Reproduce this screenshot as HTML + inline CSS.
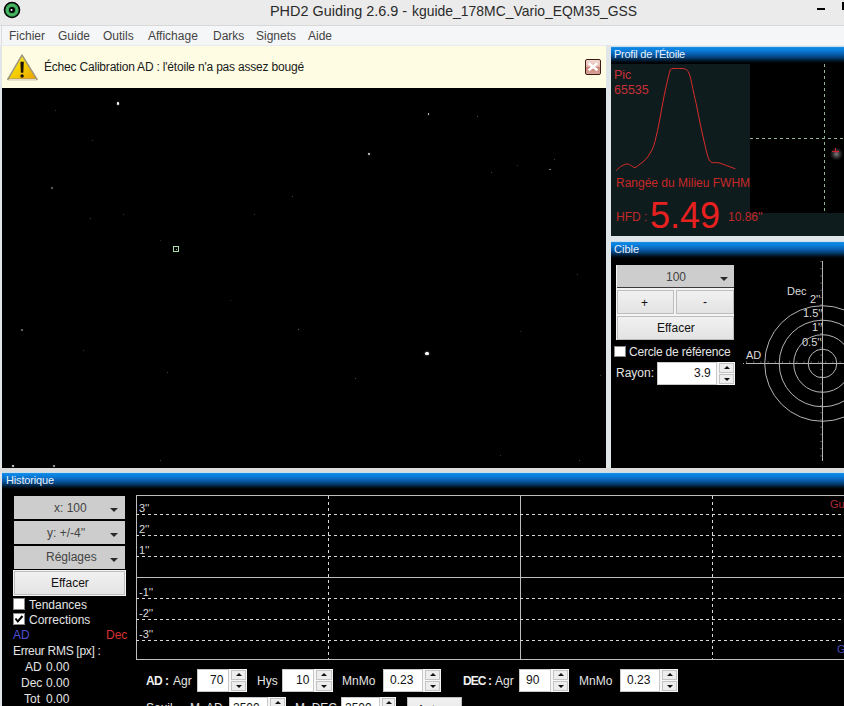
<!DOCTYPE html>
<html><head><meta charset="utf-8">
<style>
*{margin:0;padding:0;box-sizing:border-box}
html,body{width:844px;height:706px;overflow:hidden;background:#e9ecee;font-family:"Liberation Sans",sans-serif}
.a{position:absolute}
.t{position:absolute;white-space:nowrap;line-height:1}
.hdr{position:absolute;background:linear-gradient(#c4def2 0,#c4def2 1px,#2c92dc 1px,#0b86e4 2px,#0a80dc 4px,#0a70c8 6px,#0858a4 9px,#043a6c 12px,#011424 15px,#000 17px);color:#e6f2ff;font-size:11px}
.combo{position:absolute;background:#cdcdcd;color:#3c3c3c;font-size:12px;text-align:center}
.arr{position:absolute;width:0;height:0;border-left:4px solid transparent;border-right:4px solid transparent;border-top:4px solid #2a2a2a}
.btn{position:absolute;background:linear-gradient(#f1f1f1,#e3e3e3);border:1px solid #bdbdbd;color:#111;font-size:12px;text-align:center}
.fld{position:absolute;background:#fff;border:1px solid #c8c8c8;color:#111;font-size:12px}
.spin{position:absolute;background:#f6f6f6}
.spin i{position:absolute;left:2px;right:1px;height:10px;background:#ededed;border:1px solid #c4c4c4}
.up:after,.dn:after{content:"";position:absolute;left:50%;margin-left:-3px;width:0;height:0;border-left:3px solid transparent;border-right:3px solid transparent}
.up:after{top:2px;border-bottom:3px solid #111}
.dn:after{top:3px;border-top:3px solid #111}
.wt{color:#e4e4e4;font-size:12px}
</style></head><body>

<!-- Title bar -->
<div class="a" style="left:0;top:0;width:844px;height:25px;background:#ebebeb"></div>
<div class="a" style="left:0;top:25px;width:844px;height:1px;background:#d8d8d8"></div>
<svg class="a" style="left:3px;top:1px" width="19" height="19" viewBox="0 0 19 19">
  <circle cx="9" cy="9" r="7.5" fill="#36a352" stroke="#050505" stroke-width="1.6"/>
  <circle cx="9" cy="9" r="5" fill="none" stroke="#5cc472" stroke-width="1"/>
  <circle cx="9" cy="9" r="3" fill="#000"/>
  <circle cx="8.5" cy="9" r="1" fill="#fff"/>
</svg>
<div class="t" style="left:270px;top:3px;font-size:15px;color:#2a2a2a;transform:scaleX(0.962);transform-origin:0 0">PHD2 Guiding 2.6.9 -</div><div class="t" style="left:412px;top:3px;font-size:15px;color:#2a2a2a;transform:scaleX(0.929);transform-origin:0 0">kguide_178MC_Vario_EQM35_GSS</div>
<div class="a" style="left:817px;top:8px;width:8px;height:2px;background:#000"></div>
<div class="a" style="left:842px;top:2px;width:2px;height:8px;background:#000"></div>

<!-- Menu bar -->
<div class="a" style="left:0;top:26px;width:844px;height:19px;background:#f5f6f7"></div><div class="a" style="left:1px;top:26px;width:1px;height:19px;background:#dcdcdc"></div>
<div class="t" style="left:9px;top:30px;font-size:12px;color:#444">Fichier</div>
<div class="t" style="left:58px;top:30px;font-size:12px;color:#444">Guide</div>
<div class="t" style="left:103px;top:30px;font-size:12px;color:#444">Outils</div>
<div class="t" style="left:148px;top:30px;font-size:12px;color:#444">Affichage</div>
<div class="t" style="left:213px;top:30px;font-size:12px;color:#444">Darks</div>
<div class="t" style="left:256px;top:30px;font-size:12px;color:#444">Signets</div>
<div class="t" style="left:308px;top:30px;font-size:12px;color:#444">Aide</div>

<!-- left frame strip -->
<div class="a" style="left:0;top:45px;width:2px;height:423px;background:#e2e6e8"></div>

<!-- Info bar -->
<div class="a" style="left:2px;top:46px;width:604px;height:42px;background:#fefde3"></div>
<svg class="a" style="left:7px;top:54px" width="31" height="27" viewBox="0 0 31 27">
  <defs><linearGradient id="wg" x1="0" y1="0" x2="1" y2="1"><stop offset="0" stop-color="#fff27a"/><stop offset="0.45" stop-color="#f4d400"/><stop offset="1" stop-color="#eca000"/></linearGradient></defs>
  <path d="M15 1.2 L30 25.4 L0.8 25.4 Z" fill="url(#wg)" stroke="#a09878" stroke-width="1.6" stroke-linejoin="round"/>
  <path d="M1.8 25.6 L29 25.6" stroke="#e8e4d0" stroke-width="1"/>
  <path d="M13.4 7.8 h3.4 l-0.5 11 h-2.4 z" fill="#1a1208"/>
  <circle cx="15.1" cy="22" r="1.7" fill="#1a1208"/>
</svg>
<div class="t" style="left:44px;top:61px;font-size:12px;color:#1a1a1a;letter-spacing:-0.2px">Échec Calibration AD : l'étoile n'a pas assez bougé</div>
<div class="a" style="left:585px;top:59px;width:16px;height:16px;border:1.5px solid #3e1a12;border-radius:2px;background:linear-gradient(#f2d8d0 0,#e2b4aa 50%,#c88274 50%,#d8a498 100%)"></div>
<svg class="a" style="left:585px;top:59px" width="16" height="16" viewBox="0 0 16 16"><path d="M3.6 4.2 L12.4 11.3 M12.4 4.2 L3.6 11.3" stroke="#fff" stroke-width="2.4"/></svg>

<!-- Star field -->
<div class="a" style="left:2px;top:88px;width:604px;height:380px;background:#000"></div>
<div class="a" style="left:116.9px;top:102.4px;width:2.2px;height:2.2px;border-radius:50%;background:rgba(255,255,255,1.00);box-shadow:0 0 1.8px rgba(255,255,255,0.60)"></div>
<div class="a" style="left:427.6px;top:113.1px;width:1.8px;height:1.8px;border-radius:50%;background:rgba(255,255,255,0.85);box-shadow:0 0 1.4px rgba(255,255,255,0.51)"></div>
<div class="a" style="left:368.2px;top:153.2px;width:1.6px;height:1.6px;border-radius:50%;background:rgba(255,255,255,0.80);box-shadow:0 0 1.3px rgba(255,255,255,0.48)"></div>
<div class="a" style="left:425.2px;top:351.6px;width:3.6px;height:3.6px;border-radius:50%;background:rgba(255,255,255,1.00);box-shadow:0 0 2.2px rgba(255,255,255,0.60)"></div>
<div class="a" style="left:12.1px;top:465.1px;width:1.8px;height:1.8px;border-radius:50%;background:rgba(255,255,255,0.90);box-shadow:0 0 1.4px rgba(255,255,255,0.54)"></div>
<div class="a" style="left:53.4px;top:465.4px;width:1.2px;height:1.2px;border-radius:50%;background:rgba(255,255,255,0.60);box-shadow:0 0 1.0px rgba(255,255,255,0.36)"></div>
<div class="a" style="left:51.4px;top:187.4px;width:1.2px;height:1.2px;border-radius:50%;background:rgba(255,255,255,0.35);box-shadow:0 0 1.0px rgba(255,255,255,0.21)"></div>
<div class="a" style="left:549.4px;top:168.9px;width:1.2px;height:1.2px;border-radius:50%;background:rgba(255,255,255,0.50);box-shadow:0 0 1.0px rgba(255,255,255,0.30)"></div>
<div class="a" style="left:553.5px;top:158.5px;width:1.0px;height:1.0px;border-radius:50%;background:rgba(255,255,255,0.30);box-shadow:0 0 0.8px rgba(255,255,255,0.18)"></div>
<div class="a" style="left:291.5px;top:195.5px;width:1.0px;height:1.0px;border-radius:50%;background:rgba(255,255,255,0.30);box-shadow:0 0 0.8px rgba(255,255,255,0.18)"></div>
<div class="a" style="left:21.4px;top:329.4px;width:1.2px;height:1.2px;border-radius:50%;background:rgba(255,255,255,0.40);box-shadow:0 0 1.0px rgba(255,255,255,0.24)"></div>
<div class="a" style="left:297.5px;top:328.5px;width:1.0px;height:1.0px;border-radius:50%;background:rgba(255,255,255,0.45);box-shadow:0 0 0.8px rgba(255,255,255,0.27)"></div>
<div class="a" style="left:354.5px;top:377.5px;width:1.0px;height:1.0px;border-radius:50%;background:rgba(255,255,255,0.35);box-shadow:0 0 0.8px rgba(255,255,255,0.21)"></div>
<div class="a" style="left:477.0px;top:115.5px;width:1.0px;height:1.0px;border-radius:50%;background:rgba(255,255,255,0.35);box-shadow:0 0 0.8px rgba(255,255,255,0.21)"></div>
<div class="a" style="left:490.5px;top:171.5px;width:1.0px;height:1.0px;border-radius:50%;background:rgba(255,255,255,0.30);box-shadow:0 0 0.8px rgba(255,255,255,0.18)"></div>
<div class="a" style="left:516.5px;top:164.5px;width:1.0px;height:1.0px;border-radius:50%;background:rgba(255,255,255,0.25);box-shadow:0 0 0.8px rgba(255,255,255,0.15)"></div>
<div class="a" style="left:54.5px;top:109.5px;width:1.0px;height:1.0px;border-radius:50%;background:rgba(255,255,255,0.25);box-shadow:0 0 0.8px rgba(255,255,255,0.15)"></div>
<div class="a" style="left:91.5px;top:139.5px;width:1.0px;height:1.0px;border-radius:50%;background:rgba(255,255,255,0.25);box-shadow:0 0 0.8px rgba(255,255,255,0.15)"></div>
<div class="a" style="left:122.5px;top:213.5px;width:1.0px;height:1.0px;border-radius:50%;background:rgba(255,255,255,0.25);box-shadow:0 0 0.8px rgba(255,255,255,0.15)"></div>
<div class="a" style="left:89.5px;top:217.5px;width:1.0px;height:1.0px;border-radius:50%;background:rgba(255,255,255,0.30);box-shadow:0 0 0.8px rgba(255,255,255,0.18)"></div>
<div class="a" style="left:159.5px;top:239.5px;width:1.0px;height:1.0px;border-radius:50%;background:rgba(255,255,255,0.20);box-shadow:0 0 0.8px rgba(255,255,255,0.12)"></div>
<div class="a" style="left:253.5px;top:213.5px;width:1.0px;height:1.0px;border-radius:50%;background:rgba(255,255,255,0.25);box-shadow:0 0 0.8px rgba(255,255,255,0.15)"></div>
<div class="a" style="left:576.5px;top:273.5px;width:1.0px;height:1.0px;border-radius:50%;background:rgba(255,255,255,0.25);box-shadow:0 0 0.8px rgba(255,255,255,0.15)"></div>
<div class="a" style="left:519.5px;top:330.5px;width:1.0px;height:1.0px;border-radius:50%;background:rgba(255,255,255,0.20);box-shadow:0 0 0.8px rgba(255,255,255,0.12)"></div>
<div class="a" style="left:599.5px;top:374.5px;width:1.0px;height:1.0px;border-radius:50%;background:rgba(255,255,255,0.25);box-shadow:0 0 0.8px rgba(255,255,255,0.15)"></div>
<div class="a" style="left:82.5px;top:349.5px;width:1.0px;height:1.0px;border-radius:50%;background:rgba(255,255,255,0.25);box-shadow:0 0 0.8px rgba(255,255,255,0.15)"></div>
<div class="a" style="left:166.5px;top:371.5px;width:1.0px;height:1.0px;border-radius:50%;background:rgba(255,255,255,0.30);box-shadow:0 0 0.8px rgba(255,255,255,0.18)"></div>
<div class="a" style="left:229.5px;top:299.5px;width:1.0px;height:1.0px;border-radius:50%;background:rgba(255,255,255,0.20);box-shadow:0 0 0.8px rgba(255,255,255,0.12)"></div>
<div class="a" style="left:499.5px;top:454.5px;width:1.0px;height:1.0px;border-radius:50%;background:rgba(255,255,255,0.25);box-shadow:0 0 0.8px rgba(255,255,255,0.15)"></div>
<div class="a" style="left:578.5px;top:459.5px;width:1.0px;height:1.0px;border-radius:50%;background:rgba(255,255,255,0.30);box-shadow:0 0 0.8px rgba(255,255,255,0.18)"></div>
<div class="a" style="left:159.5px;top:459.5px;width:1.0px;height:1.0px;border-radius:50%;background:rgba(255,255,255,0.30);box-shadow:0 0 0.8px rgba(255,255,255,0.18)"></div>
<div class="a" style="left:173px;top:246px;width:6px;height:6px;border:1px solid #aadcaa"></div><div class="a" style="left:176px;top:249px;width:1px;height:1px;background:#80b080"></div>

<!-- right frame strip -->
<div class="a" style="left:606px;top:45px;width:5px;height:423px;background:#e0e5e8"></div>
<div class="a" style="left:606px;top:236px;width:238px;height:5px;background:#e0e5e8"></div>
<!-- bottom frame strip -->
<div class="a" style="left:0;top:468px;width:844px;height:4px;background:#dcdcdc"></div>

<!-- Profil panel -->
<div class="hdr" style="left:611px;top:46px;width:233px;height:18px"></div>
<div class="t" style="left:614px;top:49px;font-size:11px;color:#e8f2fc;letter-spacing:-0.25px">Profil de l'Étoile</div>
<div class="a" style="left:611px;top:64px;width:233px;height:172px;background:#0f1c1d"></div>
<div class="a" style="left:750px;top:64px;width:94px;height:149px;background:#000"></div>
<svg class="a" style="left:611px;top:64px" width="233" height="172" viewBox="0 0 233 172">
  <path fill="none" stroke="#dc2c2c" stroke-width="1" d="M5.2 106.5 C6.0 105.9 7.9 103.7 9.7 102.6 C11.4 101.5 14.3 100.2 15.9 100.0 C17.5 99.7 18.1 100.6 19.4 101.2 C20.8 101.8 22.3 103.7 23.9 103.5 C25.5 103.3 27.4 101.3 29.2 100.0 C31.0 98.6 32.9 97.3 34.5 95.5 C36.2 93.7 37.7 91.5 39.0 89.3 C40.3 87.1 41.5 85.0 42.5 82.2 C43.6 79.4 44.3 76.1 45.2 72.4 C46.1 68.7 47.0 64.4 47.9 60.0 C48.8 55.5 49.6 50.5 50.5 45.8 C51.4 41.0 52.3 36.0 53.2 31.5 C54.1 27.1 55.0 23.0 55.9 19.1 C56.8 15.3 57.8 10.8 58.5 8.4 C59.3 6.1 58.7 5.5 60.3 4.9 C61.9 4.2 66.1 4.5 68.3 4.5 C70.5 4.5 72.2 4.4 73.6 4.9 C75.1 5.4 76.2 5.8 77.2 7.6 C78.2 9.3 79.0 12.1 79.9 15.5 C80.7 19.0 81.5 23.2 82.5 28.0 C83.6 32.7 84.9 38.4 86.1 44.0 C87.3 49.6 88.4 56.1 89.6 61.8 C90.8 67.4 92.0 72.7 93.2 77.7 C94.4 82.8 95.6 88.6 96.7 92.0 C97.9 95.4 98.5 97.1 100.3 98.2 C102.1 99.3 105.0 98.2 107.4 98.7 C109.8 99.2 111.7 100.2 114.5 101.2 C117.3 102.2 122.7 104.2 124.3 104.8"/>
  <defs><radialGradient id="blob"><stop offset="0" stop-color="#a0a0a0" stop-opacity="0.8"/><stop offset="0.5" stop-color="#707070" stop-opacity="0.45"/><stop offset="1" stop-color="#404040" stop-opacity="0"/></radialGradient></defs>
  <line x1="213.5" y1="0" x2="213.5" y2="149" stroke="#94b294" stroke-width="1" stroke-dasharray="3,3"/>
  <line x1="139" y1="74.5" x2="233" y2="74.5" stroke="#94b294" stroke-width="1" stroke-dasharray="3,3"/>
  <circle cx="225.5" cy="90" r="7" fill="url(#blob)"/>
  <path d="M221 87.5 h7 M224.5 84 v5" stroke="#d02030" stroke-width="1"/>
</svg>
<div class="t" style="left:614px;top:69px;font-size:12.5px;color:#c83038">Pic</div>
<div class="t" style="left:614px;top:84px;font-size:12.5px;color:#c83038">65535</div>
<div class="t" style="left:616px;top:177px;font-size:12px;color:#c82828">Rangée du Milieu FWHM</div>
<div class="t" style="left:616px;top:211px;font-size:12px;color:#c02828">HFD :</div>
<div class="t" style="left:650px;top:198px;font-size:36px;color:#e82020">5.49</div>
<div class="t" style="left:728px;top:211px;font-size:12px;color:#c02828">10.86''</div>

<!-- Cible panel -->
<div class="hdr" style="left:611px;top:241px;width:233px;height:18px"></div>
<div class="t" style="left:614px;top:244px;font-size:11px;color:#e8f2fc">Cible</div>
<div class="a" style="left:611px;top:259px;width:233px;height:209px;background:#000"></div>
<div class="a" style="left:616px;top:265px;width:118px;height:75px;background:#f4f4f4"></div>
<div class="combo" style="left:617px;top:265px;width:117px;height:23px;border-bottom:1px solid #3a3a3a"></div>
<div class="t" style="left:666px;top:271px;font-size:12px;color:#444">100</div>
<div class="arr" style="left:720px;top:277px"></div>
<div class="btn" style="left:617px;top:290px;width:57px;height:24px"></div>
<div class="t" style="left:641px;top:297px;font-size:12px;color:#111">+</div>
<div class="btn" style="left:676px;top:290px;width:58px;height:24px"></div>
<div class="t" style="left:703px;top:296px;font-size:12px;color:#111">-</div>
<div class="btn" style="left:617px;top:316px;width:117px;height:24px"></div>
<div class="t" style="left:657px;top:322px;font-size:12px;color:#111">Effacer</div>
<div class="a" style="left:614px;top:346px;width:12px;height:11px;background:#fff;border:1px solid #8a8a8a"></div>
<div class="t wt" style="left:629px;top:346px;letter-spacing:-0.2px">Cercle de référence</div>
<div class="t wt" style="left:616px;top:367px">Rayon:</div>
<div class="fld" style="left:657px;top:362px;width:60px;height:23px"></div>
<div class="t" style="left:694px;top:367px;font-size:12px;color:#111">3.9</div>
<div class="spin" style="left:717px;top:362px;width:18px;height:23px"><i class="up" style="top:1px"></i><i class="dn" style="top:12px"></i></div>
<svg class="a" style="left:611px;top:259px" width="233" height="209" viewBox="0 0 233 209">
  <g fill="none" stroke="#b4b4b4" stroke-width="1">
    <line x1="211.5" y1="2" x2="211.5" y2="202"/>
    <line x1="135" y1="104.5" x2="233" y2="104.5"/>
    <circle cx="211.5" cy="104.5" r="14.3"/>
    <circle cx="211.5" cy="104.5" r="28.8"/>
    <circle cx="211.5" cy="104.5" r="43.3"/>
    <circle cx="211.5" cy="104.5" r="57.8"/>
    <line x1="211" y1="2" x2="211" y2="202" stroke-dasharray="1,6.2" stroke="#909090" transform="translate(-1,0)"/>
    <line x1="135" y1="103" x2="233" y2="103" stroke-dasharray="1,6.2" stroke="#909090"/>
  </g>
  <rect x="132" y="104" width="1" height="1" fill="#b4b4b4"/>
</svg>
<div class="t" style="left:787px;top:286px;font-size:11px;color:#dcdcdc">Dec</div>
<div class="t" style="left:810px;top:294px;font-size:11px;color:#dcdcdc">2''</div>
<div class="t" style="left:803px;top:308px;font-size:11px;color:#dcdcdc">1.5''</div>
<div class="t" style="left:812px;top:322px;font-size:11px;color:#dcdcdc">1''</div>
<div class="t" style="left:802px;top:337px;font-size:11px;color:#dcdcdc">0.5''</div>
<div class="t" style="left:746px;top:350px;font-size:11px;color:#dcdcdc">AD</div>

<!-- Historique panel -->
<div class="a" style="left:0;top:472px;width:2px;height:234px;background:#e2e6e8"></div>
<div class="hdr" style="left:2px;top:472px;width:842px;height:18px"></div>
<div class="t" style="left:6px;top:475px;font-size:11px;color:#e8f2fc;letter-spacing:-0.15px">Historique</div>
<div class="a" style="left:2px;top:490px;width:842px;height:216px;background:#000"></div>

<div class="combo" style="left:14px;top:496px;width:111px;height:23px"></div>
<div class="t" style="left:54px;top:502px;font-size:12px;color:#444">x: 100</div>
<div class="arr" style="left:110px;top:508px"></div>
<div class="combo" style="left:14px;top:521px;width:111px;height:23px"></div>
<div class="t" style="left:47px;top:527px;font-size:12px;color:#444">y: +/-4''</div>
<div class="arr" style="left:110px;top:533px"></div>
<div class="combo" style="left:14px;top:546px;width:111px;height:23px"></div>
<div class="t" style="left:46px;top:551px;font-size:12px;color:#444">Réglages</div>
<div class="arr" style="left:110px;top:558px"></div>
<div class="a" style="left:13px;top:570px;width:113px;height:26px;background:#f4f4f4"></div>
<div class="btn" style="left:14px;top:571px;width:111px;height:24px"></div>
<div class="t" style="left:51px;top:577px;font-size:12px;color:#111">Effacer</div>

<div class="a" style="left:13px;top:598px;width:12px;height:12px;background:#fff;border:1px solid #8a8a8a"></div>
<div class="t wt" style="left:29px;top:599px">Tendances</div>
<div class="a" style="left:13px;top:613px;width:12px;height:12px;background:#fff;border:1px solid #8a8a8a"></div>
<svg class="a" style="left:13px;top:613px" width="12" height="12" viewBox="0 0 12 12"><path d="M2.5 5.5 L4.8 8.5 L9.5 3" fill="none" stroke="#000" stroke-width="2"/></svg>
<div class="t wt" style="left:29px;top:614px">Corrections</div>
<div class="t" style="left:13px;top:629px;font-size:12px;color:#5050d8">AD</div>
<div class="t" style="left:106px;top:629px;font-size:12px;color:#d83030">Dec</div>
<div class="t wt" style="left:13px;top:645px;letter-spacing:-0.3px">Erreur RMS [px] :</div>
<div class="t wt" style="left:25px;top:661px">AD</div>
<div class="t wt" style="left:46px;top:661px">0.00</div>
<div class="t wt" style="left:21px;top:677px">Dec</div>
<div class="t wt" style="left:46px;top:677px">0.00</div>
<div class="t wt" style="left:24px;top:693px">Tot</div>
<div class="t wt" style="left:46px;top:693px">0.00</div>

<svg class="a" style="left:0;top:490px" width="844" height="216" viewBox="0 0 844 216">
  <g fill="none" stroke-width="1">
    <rect x="136.5" y="5.5" width="800" height="164" stroke="#bdbdbd"/>
    <line x1="136" y1="87.5" x2="844" y2="87.5" stroke="#bdbdbd"/>
    <line x1="520.5" y1="5" x2="520.5" y2="170" stroke="#bdbdbd"/>
    <g stroke="#d8d8d8" stroke-dasharray="3,3">
      <line x1="136" y1="24.5" x2="844" y2="24.5"/>
      <line x1="136" y1="45.5" x2="844" y2="45.5"/>
      <line x1="136" y1="66.5" x2="844" y2="66.5"/>
      <line x1="136" y1="108.5" x2="844" y2="108.5"/>
      <line x1="136" y1="129.5" x2="844" y2="129.5"/>
      <line x1="136" y1="150.5" x2="844" y2="150.5"/>
      <line x1="328.5" y1="6" x2="328.5" y2="169"/>
      <line x1="712.5" y1="6" x2="712.5" y2="169"/>
    </g>
  </g>
</svg>
<div class="t" style="left:139px;top:503px;font-size:11px;color:#dcdcdc">3''</div>
<div class="t" style="left:139px;top:524px;font-size:11px;color:#dcdcdc">2''</div>
<div class="t" style="left:139px;top:545px;font-size:11px;color:#dcdcdc">1''</div>
<div class="t" style="left:139px;top:587px;font-size:11px;color:#dcdcdc">-1''</div>
<div class="t" style="left:139px;top:608px;font-size:11px;color:#dcdcdc">-2''</div>
<div class="t" style="left:139px;top:629px;font-size:11px;color:#dcdcdc">-3''</div>
<div class="t" style="left:830px;top:499px;font-size:11px;color:#b02838">Gu</div>
<div class="t" style="left:837px;top:644px;font-size:11px;color:#4848b8">G</div>

<!-- bottom controls -->
<div class="t" style="left:146px;top:675px;font-size:12px;color:#f0f0f0;font-weight:bold;letter-spacing:-0.6px">AD</div><div class="t" style="left:165px;top:675px;font-size:12px;color:#f0f0f0;font-weight:bold">:</div>
<div class="t wt" style="left:173px;top:675px">Agr</div>
<div class="fld" style="left:197px;top:669px;width:32px;height:23px"></div>
<div class="t" style="left:210px;top:674px;font-size:12px;color:#111">70</div>
<div class="spin" style="left:229px;top:669px;width:18px;height:23px"><i class="up" style="top:1px"></i><i class="dn" style="top:12px"></i></div>
<div class="t wt" style="left:257px;top:675px">Hys</div>
<div class="fld" style="left:282px;top:669px;width:32px;height:23px"></div>
<div class="t" style="left:296px;top:674px;font-size:12px;color:#111">10</div>
<div class="spin" style="left:314px;top:669px;width:19px;height:23px"><i class="up" style="top:1px"></i><i class="dn" style="top:12px"></i></div>
<div class="t wt" style="left:342px;top:675px">MnMo</div>
<div class="fld" style="left:383px;top:669px;width:40px;height:23px"></div>
<div class="t" style="left:390px;top:674px;font-size:12px;color:#111">0.23</div>
<div class="spin" style="left:423px;top:669px;width:18px;height:23px"><i class="up" style="top:1px"></i><i class="dn" style="top:12px"></i></div>
<div class="t" style="left:463px;top:675px;font-size:12px;color:#f0f0f0;font-weight:bold;letter-spacing:-0.9px">DEC</div><div class="t" style="left:488px;top:675px;font-size:12px;color:#f0f0f0;font-weight:bold">:</div>
<div class="t wt" style="left:495px;top:675px">Agr</div>
<div class="fld" style="left:519px;top:669px;width:32px;height:23px"></div>
<div class="t" style="left:526px;top:674px;font-size:12px;color:#111">90</div>
<div class="spin" style="left:551px;top:669px;width:18px;height:23px"><i class="up" style="top:1px"></i><i class="dn" style="top:12px"></i></div>
<div class="t wt" style="left:579px;top:675px">MnMo</div>
<div class="fld" style="left:620px;top:669px;width:40px;height:23px"></div>
<div class="t" style="left:627px;top:674px;font-size:12px;color:#111">0.23</div>
<div class="spin" style="left:660px;top:669px;width:18px;height:23px"><i class="up" style="top:1px"></i><i class="dn" style="top:12px"></i></div>

<!-- second row (cut off) -->
<div class="t wt" style="left:146px;top:702px">Seuil</div>
<div class="t wt" style="left:190px;top:702px">M. AD</div>
<div class="fld" style="left:229px;top:697px;width:39px;height:23px"></div>
<div class="t" style="left:233px;top:702px;font-size:12px;color:#111">2500</div>
<div class="spin" style="left:268px;top:697px;width:18px;height:23px"><i class="up" style="top:1px"></i></div>
<div class="t wt" style="left:295px;top:702px">M. DEC</div>
<div class="fld" style="left:341px;top:697px;width:39px;height:23px"></div>
<div class="t" style="left:345px;top:702px;font-size:12px;color:#111">2500</div>
<div class="spin" style="left:380px;top:697px;width:16px;height:23px"><i class="up" style="top:1px"></i></div>
<div class="btn" style="left:407px;top:697px;width:55px;height:24px"></div>
<div class="t" style="left:417px;top:704px;font-size:12px;color:#111">Auto</div>

</body></html>
